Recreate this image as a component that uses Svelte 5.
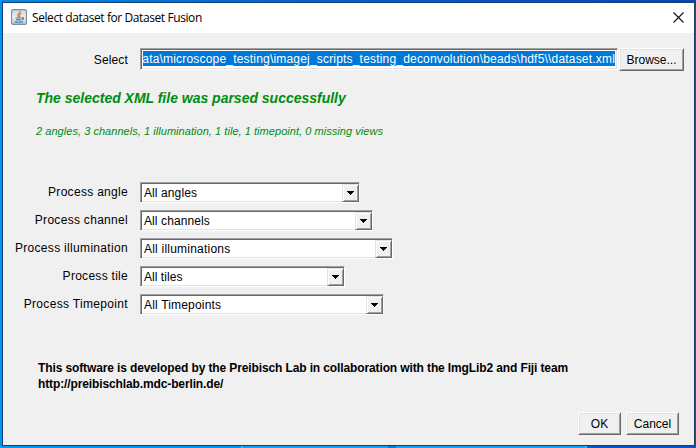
<script>
  const choices = [
    { label: 'Process angle', value: 'All angles', width: 220, ls: 0.3, vs: 0.1 },
    { label: 'Process channel', value: 'All channels', width: 233, ls: 0.3, vs: 0.1 },
    { label: 'Process illumination', value: 'All illuminations', width: 253, ls: 0.32, vs: 0.22 },
    { label: 'Process tile', value: 'All tiles', width: 205, ls: 0.28, vs: 0.05 },
    { label: 'Process Timepoint', value: 'All Timepoints', width: 244, ls: 0.33, vs: 0.18 }
  ];
  const path = 'ata\\microscope_testing\\imagej_scripts_testing_deconvolution\\beads\\hdf5\\\\dataset.xml';
</script>

<div class="desktop">
  <div class="window">
    <header>
      <svg class="java" width="16" height="16" viewBox="0 0 16 16">
        <defs>
          <linearGradient id="tile" x1="0" y1="0" x2="0" y2="1">
            <stop offset="0" stop-color="#8ba3b6" />
            <stop offset="0.5" stop-color="#dbe3e9" />
            <stop offset="1" stop-color="#7895ab" />
          </linearGradient>
        </defs>
        <rect x="0.5" y="0.5" width="15" height="15" rx="1" fill="url(#tile)" stroke="#7890a3" />
        <rect x="1.5" y="1.5" width="13" height="13" fill="#f0f3f5" fill-opacity="0.65" />
        <path d="M9.3 2C10 4 5.8 4.7 6.8 7L7.8 8.3M10.5 4.5C8 5.5 8 6.5 9 8" fill="none" stroke="#e07b28" stroke-width="1.3" />
        <path d="M4.5 9H10.5M5 10.8H10M10.8 9C13.4 8.2 12.8 10.4 10.8 10.7M3.5 12.7Q7.5 13.8 12.2 12.7" fill="none" stroke="#4d7c9e" stroke-width="1.2" />
      </svg>
      <span class="title">Select dataset for Dataset Fusion</span>
      <svg class="close" width="11" height="11" viewBox="0 0 11 11"><path d="M.5.5L10.5 10.5M10.5.5L.5 10.5" stroke="#111" stroke-width="1.1" /></svg>
    </header>

    <main>
      <div class="file">
        <label for="xml">Select</label>
        <div class="field" id="xml"><div class="selection"><span>{path}</span></div></div>
        <button class="browse">Browse...</button>
      </div>
      <h1>The selected XML file was parsed successfully</h1>
      <p class="summary">2 angles, 3 channels, 1 illumination, 1 tile, 1 timepoint, 0 missing views</p>

      <div class="choices">
        {#each choices as c}
          <div class="row">
            <div class="label"><span style="letter-spacing:{c.ls}px">{c.label}</span></div>
            <div class="choice" style="width:{c.width}px">
              <span style="letter-spacing:{c.vs}px">{c.value}</span>
              <div class="arrow"><svg width="7" height="4" viewBox="0 0 7 4" shape-rendering="crispEdges"><path d="M0 0H7V1H6V2H5V3H4V4H3V3H2V2H1V1H0Z" /></svg></div>
            </div>
          </div>
        {/each}
      </div>

      <div class="credit">
        <div>This software is developed by the Preibisch Lab in collaboration with the ImgLib2 and Fiji team</div>
        <div>http://preibischlab.mdc-berlin.de/</div>
      </div>
      <footer>
        <button class="ok">OK</button>
        <button class="cancel">Cancel</button>
      </footer>
    </main>
  </div>
</div>

<style>
  .desktop {
    box-sizing: border-box;
    width: 696px;
    height: 448px;
    padding: 2px 1px 2px 2px;
    overflow: hidden;
    background:
      linear-gradient(90deg, #0097f4 0 241px, #20d5df 241px 243px, #159ff5 243px 388px, #0678db 388px 396px, #18a1f5 396px 585px, #25c8f4 585px 587px, #0756c8 587px) 0 100% / 100% 3px no-repeat,
      linear-gradient(90deg, #008bea, #0068d5 35%, #0750c4 75%, #0647b8) 0 0 / 100% 3px no-repeat,
      linear-gradient(90deg, #0097f4 0 50%, #0750bd 50%);
    font: 12px/16px 'Liberation Sans', Arial, sans-serif;
    color: #000;
  }
  .window {
    box-sizing: border-box;
    width: 693px;
    height: 444px;
    border: 1px solid #173f69;
    background: #f0f0f0;
    display: flex;
    flex-direction: column;
  }
  header {
    height: 30px;
    flex: none;
    background: #fff;
    display: flex;
    align-items: center;
    padding: 0 10px 0 8px;
  }
  .java { margin-top: -2px; }
  .title {
    margin: 0 auto 0 5px;
    font: 12px/16px 'Open Sans', sans-serif;
    letter-spacing: -0.41px;
    white-space: nowrap;
  }
  .close { margin-bottom: 2px; }
  main { flex: 1; }
  .file { display: flex; padding-top: 15px; height: 23px; }
  label, .label {
    width: 125px;
    margin-right: 12px;
    text-align: right;
    white-space: nowrap;
    flex: none;
  }
  label { padding-top: 4px; letter-spacing: 0.15px; }
  .field, .choice {
    box-sizing: border-box;
    border: 1px solid;
    border-color: #a0a0a0 #fff #fff #a0a0a0;
    background: #fff;
    box-shadow: inset 1px 1px #696969, inset -1px -1px #e3e3e3;
  }
  .field { width: 478px; height: 22px; padding: 2px; }
  .selection {
    height: 15px;
    background: #0078d7;
    color: #fff;
    display: flex;
    justify-content: flex-end;
    overflow: hidden;
    line-height: 17px;
    letter-spacing: 0.19px;
    white-space: nowrap;
  }
  button {
    box-sizing: border-box;
    border: 1px solid;
    border-color: #fff #696969 #696969 #fff;
    box-shadow: inset 1px 1px #e3e3e3, inset -1px -1px #a0a0a0;
    background: #f0f0f0;
    padding: 0;
    font: inherit;
    color: #000;
    height: 23px;
    text-align: center;
    border-radius: 0;
    white-space: nowrap;
  }
  .browse { width: 65px; margin-left: 1px; }
  h1 {
    margin: 19px 0 0 33px;
    font: italic bold 14px/16px 'Liberation Sans', Arial, sans-serif;
    color: #008c0e;
    white-space: nowrap;
    letter-spacing: -0.01px;
  }
  .summary {
    margin: 17px 0 0 33px;
    font: italic 11px/16px 'Liberation Sans', Arial, sans-serif;
    color: #008c0e;
    white-space: nowrap;
    letter-spacing: 0.045px;
  }
  .choices {
    margin-top: 43px;
    display: flex;
    flex-direction: column;
    gap: 7px;
  }
  .row { display: flex; height: 21px; }
  .label { padding-top: 2px; }
  .choice {
    height: 21px;
    display: flex;
    justify-content: space-between;
    padding: 1px 0 1px 3px;
    line-height: 18px;
    white-space: nowrap;
  }
  .arrow {
    box-sizing: border-box;
    width: 17px;
    height: 18px;
    border: 1px solid;
    border-color: #e3e3e3 #696969 #696969 #e3e3e3;
    box-shadow: inset 1px 1px #fff, inset -1px -1px #a0a0a0;
    background: #f0f0f0;
    display: flex;
    align-items: center;
    justify-content: center;
  }
  .credit {
    margin: 45px 0 0 35px;
    font-weight: bold;
    white-space: nowrap;
    letter-spacing: -0.12px;
  }
  footer {
    display: flex;
    gap: 5px;
    justify-content: flex-end;
    padding: 20px 15px 0 0;
  }
  .ok { width: 43px; }
  .cancel { width: 53px; }
</style>
